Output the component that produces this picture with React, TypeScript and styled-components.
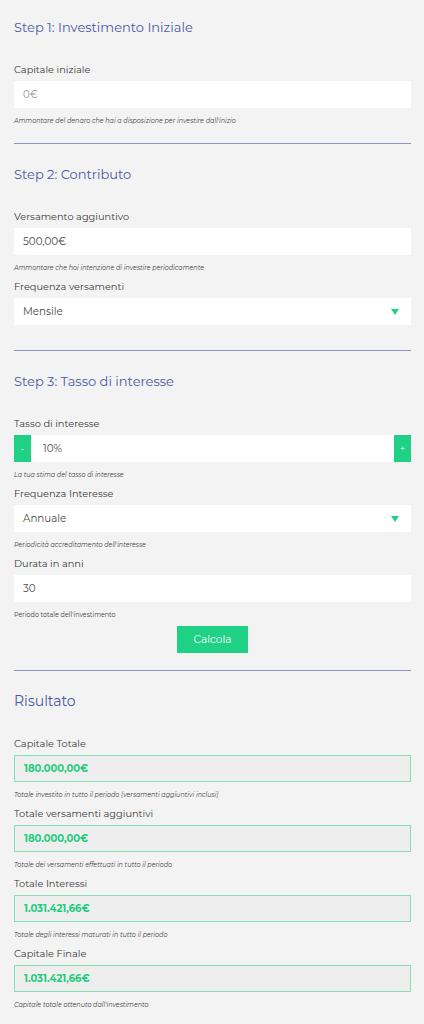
import React from "react";
import styled, { createGlobalStyle } from "styled-components";

const GlobalStyle = createGlobalStyle`
  body {
    margin: 0;
    background: #f3f3f3;
    font-family: "Montserrat", Lato, "Open Sans", sans-serif;
  }
`;

const Page = styled.div`
  padding: 17px 13px 20px 14px;
`;

const Section = styled.section<{ $bottom?: number }>`
  padding-bottom: ${(p) => p.$bottom ?? 17}px;
`;

const Heading = styled.h2<{ $large?: boolean }>`
  margin: 0 0 25px;
  font-size: ${(p) => (p.$large ? 14 : 13)}px;
  line-height: 20px;
  font-weight: 400;
  color: #4a5aa6;
`;

const Divider = styled.hr`
  margin: 0 0 20px;
  border: none;
  border-top: 1px solid #8c96c6;
`;

const Field = styled.div`
  margin-bottom: 6px;
`;

const Label = styled.label`
  display: block;
  margin-bottom: 3px;
  font-size: 9.8px;
  line-height: 16px;
  color: #3b3b3b;
`;

const Input = styled.input`
  display: block;
  box-sizing: border-box;
  width: 100%;
  height: 27px;
  padding: 0 9px;
  border: none;
  outline: none;
  background: #fff;
  font-family: inherit;
  font-size: 10.3px;
  color: #4a4a4a;

  &::placeholder {
    color: #9a9a9a;
  }
`;

const Help = styled.p<{ $plain?: boolean }>`
  margin: 8px 0 0;
  font-size: 6.4px;
  line-height: 10px;
  font-style: ${(p) => (p.$plain ? "normal" : "italic")};
  color: #3f3f3f;
`;

const SelectBox = styled.div`
  display: flex;
  align-items: center;
  justify-content: space-between;
  height: 27px;
  padding: 0 12px 0 9px;
  background: #fff;
  font-size: 10.3px;
  color: #4a4a4a;
`;

const Arrow = styled.span`
  width: 0;
  height: 0;
  border-left: 4px solid transparent;
  border-right: 4px solid transparent;
  border-top: 6px solid #1fd184;
`;

const Stepper = styled.div`
  display: flex;
  height: 27px;
  background: #fff;
`;

const StepButton = styled.button`
  width: 17px;
  padding: 0;
  border: none;
  background: #1fd184;
  color: #fff;
  font-family: inherit;
  font-size: 9px;
`;

const StepInput = styled(Input)`
  flex: 1;
  padding: 0 12px;
`;

const ButtonRow = styled.div`
  display: flex;
  justify-content: center;
`;

const Calc = styled.button`
  width: 71px;
  height: 27px;
  border: none;
  background: #1fd184;
  color: #fff;
  font-family: inherit;
  font-size: 10.5px;
`;

const ResultBox = styled.div`
  box-sizing: border-box;
  display: flex;
  align-items: center;
  height: 27px;
  padding: 0 9px;
  border: 1px solid #86dfb5;
  background: #eeeeee;
  font-size: 10px;
  font-weight: 700;
  color: #1fcc7e;
`;

const results = [
  { label: "Capitale Totale", value: "180.000,00€", help: "Totale investito in tutto il periodo (versamenti aggiuntivi inclusi)" },
  { label: "Totale versamenti aggiuntivi", value: "180.000,00€", help: "Totale dei versamenti effettuati in tutto il periodo" },
  { label: "Totale Interessi", value: "1.031.421,66€", help: "Totale degli interessi maturati in tutto il periodo" },
  { label: "Capitale Finale", value: "1.031.421,66€", help: "Capitale totale ottenuto dall'investimento" },
];

export default function App() {
  return (
    <Page>
      <GlobalStyle />
      <Section $bottom={11}>
        <Heading>Step 1: Investimento Iniziale</Heading>
        <Field>
          <Label>Capitale iniziale</Label>
          <Input placeholder="0€" />
          <Help>Ammontare del denaro che hai a disposizione per investire dall'inizio</Help>
        </Field>
      </Section>
      <Divider />

      <Section $bottom={19}>
        <Heading>Step 2: Contributo</Heading>
        <Field>
          <Label>Versamento aggiuntivo</Label>
          <Input defaultValue="500,00€" />
          <Help>Ammontare che hoi intenzione di investire periodicamente</Help>
        </Field>
        <Field>
          <Label>Frequenza versamenti</Label>
          <SelectBox>
            Mensile
            <Arrow />
          </SelectBox>
        </Field>
      </Section>
      <Divider />

      <Section>
        <Heading>Step 3: Tasso di interesse</Heading>
        <Field>
          <Label>Tasso di interesse</Label>
          <Stepper>
            <StepButton>-</StepButton>
            <StepInput defaultValue="10%" />
            <StepButton>+</StepButton>
          </Stepper>
          <Help>La tua stima del tasso di interesse</Help>
        </Field>
        <Field>
          <Label>Frequenza Interesse</Label>
          <SelectBox>
            Annuale
            <Arrow />
          </SelectBox>
          <Help>Periodicità accreditamento dell'interesse</Help>
        </Field>
        <Field>
          <Label>Durata in anni</Label>
          <Input defaultValue="30" />
          <Help $plain>Periodo totale dell'investimento</Help>
        </Field>
        <ButtonRow>
          <Calc>Calcola</Calc>
        </ButtonRow>
      </Section>
      <Divider />

      <Section>
        <Heading $large>Risultato</Heading>
        {results.map((r) => (
          <Field key={r.label}>
            <Label>{r.label}</Label>
            <ResultBox>{r.value}</ResultBox>
            <Help>{r.help}</Help>
          </Field>
        ))}
      </Section>
    </Page>
  );
}
